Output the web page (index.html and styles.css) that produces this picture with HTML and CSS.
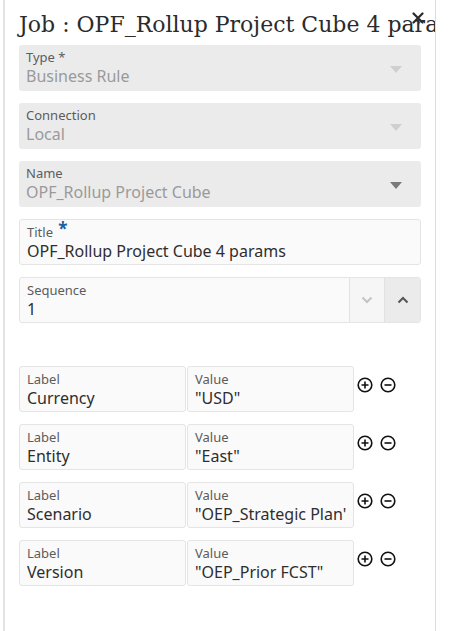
FILE: index.html
```html
<!DOCTYPE html>
<html>
<head>
<meta charset="utf-8">
<link rel="stylesheet" href="styles.css">
</head>
<body>
<div class="panel">
  <h1 class="heading">Job : OPF_Rollup Project Cube 4 params</h1>
  <svg class="close" width="12" height="12" viewBox="0 0 12 12"><path d="M1.5 1.5 L10.5 10.5 M10.5 1.5 L1.5 10.5" stroke="#2b2b2b" stroke-width="2.2" stroke-linecap="round"/></svg>
  <div class="form">
    <div class="field disabled">
      <div class="txt"><div class="lbl">Type *</div><div class="val">Business Rule</div></div>
      <span class="tri light"></span>
    </div>
    <div class="field disabled">
      <div class="txt"><div class="lbl">Connection</div><div class="val">Local</div></div>
      <span class="tri light"></span>
    </div>
    <div class="field disabled">
      <div class="txt"><div class="lbl">Name</div><div class="val">OPF_Rollup Project Cube</div></div>
      <span class="tri dark"></span>
    </div>
    <div class="field input">
      <div class="txt"><div class="lbl">Title <span class="req">*</span></div><div class="val">OPF_Rollup Project Cube 4 params</div></div>
    </div>
    <div class="field input seq">
      <div class="txt"><div class="lbl">Sequence</div><div class="val">1</div></div>
      <div class="btn down"><svg width="12" height="8" viewBox="0 0 12 8"><path d="M1.5 1.5 L6 6 L10.5 1.5" fill="none" stroke="#c4c4c4" stroke-width="2"/></svg></div>
      <div class="btn up"><svg width="12" height="8" viewBox="0 0 12 8"><path d="M1.5 6.5 L6 2 L10.5 6.5" fill="none" stroke="#555" stroke-width="2"/></svg></div>
    </div>
  </div>
  <div class="params">
    <div class="row">
      <div class="box"><div class="lbl">Label</div><div class="val">Currency</div></div>
      <div class="box"><div class="lbl">Value</div><div class="val">"USD"</div></div>
      <div class="icons">
        <svg width="16" height="16" viewBox="0 0 16 16"><circle cx="8" cy="8" r="6.8" fill="none" stroke="#111" stroke-width="1.6"/><path d="M4.5 8 H11.5 M8 4.5 V11.5" stroke="#111" stroke-width="1.6"/></svg>
        <svg width="16" height="16" viewBox="0 0 16 16"><circle cx="8" cy="8" r="6.8" fill="none" stroke="#111" stroke-width="1.6"/><path d="M4.5 8 H11.5" stroke="#111" stroke-width="1.6"/></svg>
      </div>
    </div>
    <div class="row">
      <div class="box"><div class="lbl">Label</div><div class="val">Entity</div></div>
      <div class="box"><div class="lbl">Value</div><div class="val">"East"</div></div>
      <div class="icons">
        <svg width="16" height="16" viewBox="0 0 16 16"><circle cx="8" cy="8" r="6.8" fill="none" stroke="#111" stroke-width="1.6"/><path d="M4.5 8 H11.5 M8 4.5 V11.5" stroke="#111" stroke-width="1.6"/></svg>
        <svg width="16" height="16" viewBox="0 0 16 16"><circle cx="8" cy="8" r="6.8" fill="none" stroke="#111" stroke-width="1.6"/><path d="M4.5 8 H11.5" stroke="#111" stroke-width="1.6"/></svg>
      </div>
    </div>
    <div class="row">
      <div class="box"><div class="lbl">Label</div><div class="val">Scenario</div></div>
      <div class="box"><div class="lbl">Value</div><div class="val">"OEP_Strategic Plan"</div></div>
      <div class="icons">
        <svg width="16" height="16" viewBox="0 0 16 16"><circle cx="8" cy="8" r="6.8" fill="none" stroke="#111" stroke-width="1.6"/><path d="M4.5 8 H11.5 M8 4.5 V11.5" stroke="#111" stroke-width="1.6"/></svg>
        <svg width="16" height="16" viewBox="0 0 16 16"><circle cx="8" cy="8" r="6.8" fill="none" stroke="#111" stroke-width="1.6"/><path d="M4.5 8 H11.5" stroke="#111" stroke-width="1.6"/></svg>
      </div>
    </div>
    <div class="row">
      <div class="box"><div class="lbl">Label</div><div class="val">Version</div></div>
      <div class="box"><div class="lbl">Value</div><div class="val">"OEP_Prior FCST"</div></div>
      <div class="icons">
        <svg width="16" height="16" viewBox="0 0 16 16"><circle cx="8" cy="8" r="6.8" fill="none" stroke="#111" stroke-width="1.6"/><path d="M4.5 8 H11.5 M8 4.5 V11.5" stroke="#111" stroke-width="1.6"/></svg>
        <svg width="16" height="16" viewBox="0 0 16 16"><circle cx="8" cy="8" r="6.8" fill="none" stroke="#111" stroke-width="1.6"/><path d="M4.5 8 H11.5" stroke="#111" stroke-width="1.6"/></svg>
      </div>
    </div>
  </div>
</div>
</body>
</html>
```

FILE: styles.css
```css
html, body {
  margin: 0;
  padding: 0;
  background: #fff;
}

.panel {
  position: relative;
  margin-left: 3px;
  width: 430px;
  height: 631px;
  border-left: 2px solid #e2e2e2;
  border-right: 1px solid #dcdcdc;
  box-sizing: content-box;
  overflow: hidden;
  font-family: "Noto Sans", sans-serif;
}

.heading {
  margin: 0;
  padding: 10px 0 0 14px;
  height: 40px;
  box-sizing: border-box;
  font-family: "DejaVu Serif", serif;
  font-weight: normal;
  font-size: 22px;
  line-height: 30px;
  color: #2b2b2b;
  white-space: nowrap;
}

.close {
  position: absolute;
  left: 407px;
  top: 12px;
}

.form {
  display: flex;
  flex-direction: column;
  gap: 12px;
  margin: 5px 0 0 14px;
  width: 402px;
}

.field {
  position: relative;
  display: flex;
  height: 46px;
  box-sizing: border-box;
  border-radius: 3px;
}

.field .txt {
  flex: 1;
  padding: 4px 7px 0 7px;
}

.disabled {
  background: #ebebeb;
}

.disabled .val {
  color: #9a9a9a;
}

.input {
  background: #fafafa;
  border: 1px solid #e4e4e4;
}

.lbl {
  font-size: 13px;
  line-height: 17px;
  color: #5c5c5c;
}

.val {
  font-size: 16px;
  line-height: 21px;
  color: #2e2e2e;
  white-space: nowrap;
  overflow: hidden;
}

.req {
  color: #1d5fa3;
  font-weight: bold;
  font-size: 17px;
  line-height: 10px;
  position: relative;
  top: -2px;
  left: 2px;
}

.tri {
  position: absolute;
  right: 19px;
  top: 21px;
  width: 0;
  height: 0;
  border-left: 6px solid transparent;
  border-right: 6px solid transparent;
  border-top: 7px solid #cfcfcf;
}

.tri.dark {
  border-top-color: #7a7a7a;
}

.seq .btn {
  display: flex;
  align-items: center;
  justify-content: center;
  border-left: 1px solid #e2e2e2;
}

.seq .down {
  width: 34px;
  background: #f6f6f6;
}

.seq .up {
  width: 35px;
  background: #ebebeb;
  border-radius: 0 3px 3px 0;
}

.params {
  display: flex;
  flex-direction: column;
  gap: 12px;
  margin: 43px 0 0 14px;
}

.row {
  display: flex;
  gap: 1px;
  height: 46px;
}

.box {
  width: 167px;
  box-sizing: border-box;
  background: #fafafa;
  border: 1px solid #e4e4e4;
  border-radius: 3px;
  padding: 4px 7px 0 7px;
}

.icons {
  display: flex;
  gap: 7px;
  padding: 11px 0 0 2px;
  align-items: flex-start;
}
```
